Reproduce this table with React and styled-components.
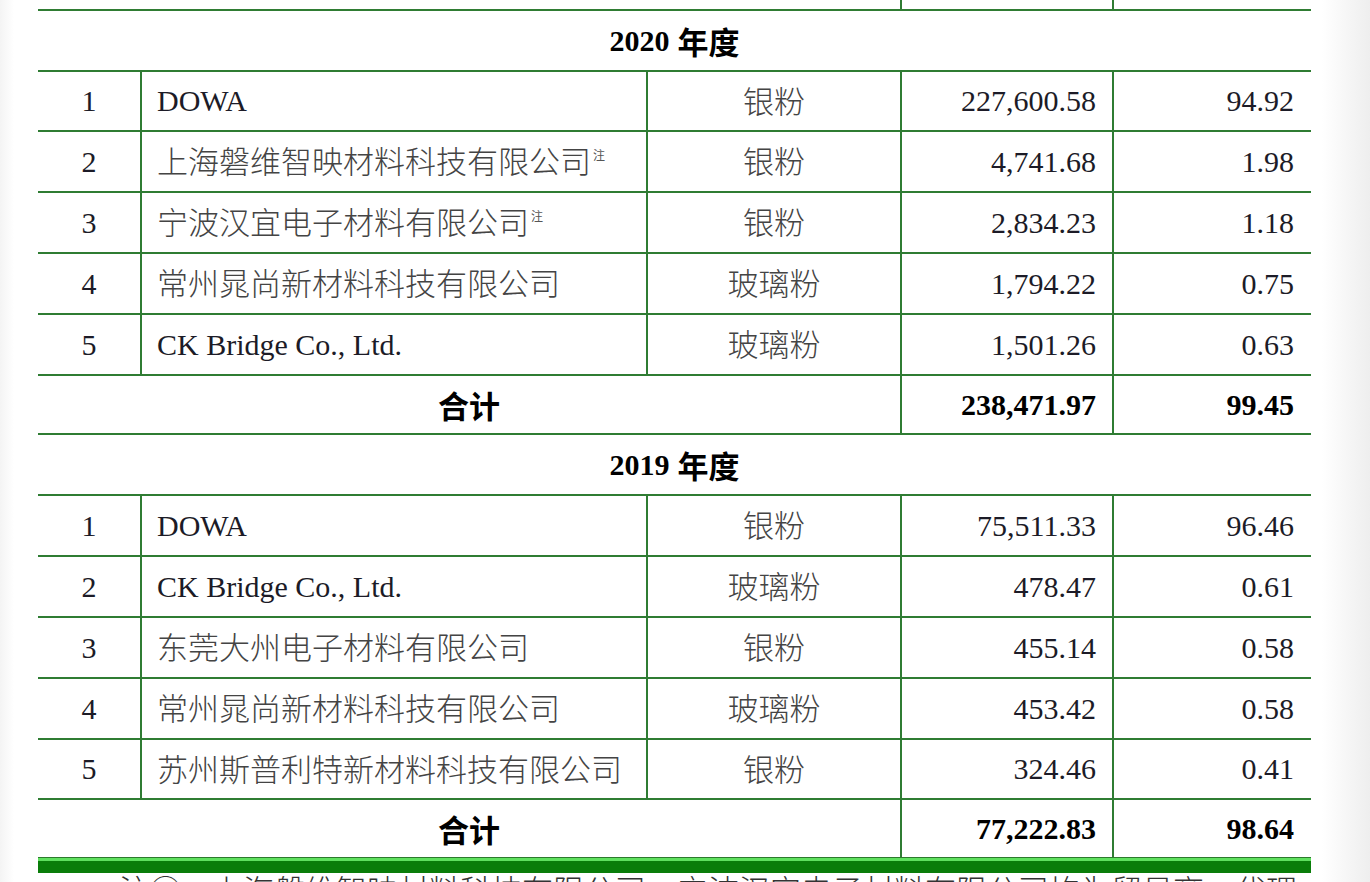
import React from 'react';
import styled, { createGlobalStyle } from 'styled-components';

const LINE = '#2f7c33';

const Global = createGlobalStyle`
  html, body {
    margin: 0;
    padding: 0;
    height: 882px;
    overflow: hidden;
    background: linear-gradient(to right, #f4f4f4 0, #ffffff 14px, #ffffff 1322px, #eeeeee 1370px);
  }
  body {
    font-family: "Liberation Serif", "Noto Sans CJK SC", serif;
    color: #1c1b27;
  }
`;

const Table = styled.div`
  margin-left: 38px;
  width: 1273px;
`;

const Row = styled.div`
  display: grid;
  grid-template-columns: 102px 506px 254px 212px 199px;
  box-sizing: border-box;
  height: ${(p) => p.$h}px;
  border-bottom: ${(p) => (p.$noLine ? 'none' : `2px solid ${LINE}`)};
`;

const Cell = styled.div`
  display: flex;
  align-items: center;
  justify-content: ${(p) =>
    p.$align === 'left' ? 'flex-start' : p.$align === 'right' ? 'flex-end' : 'center'};
  padding-left: ${(p) => (p.$align === 'left' ? 15 : 0)}px;
  padding-right: ${(p) => (p.$align === 'right' ? p.$pr || 16 : 0)}px;
  border-left: ${(p) => (p.$divider ? `2px solid ${LINE}` : 'none')};
  grid-column: ${(p) => p.$span || 'auto'};
  font-size: 30px;
  font-weight: ${(p) => (p.$bold ? 700 : 400)};
  color: ${(p) => (p.$bold ? '#000' : '#1c1b27')};
  white-space: nowrap;
`;

const CJK = styled.span`
  font-family: "Noto Sans CJK SC", sans-serif;
  font-size: 31px;
  color: ${(p) => (p.$bold ? '#000' : '#444')};
  font-weight: ${(p) => (p.$bold ? 700 : 300)};
  margin-left: ${(p) => p.$ml || 0}px;
  position: relative;
  top: ${(p) => (p.$bold ? 0 : -2)}px;
`;

const Mark = styled.span`
  font-family: "Noto Sans CJK SC", sans-serif;
  font-size: 12px;
  color: #555;
  align-self: flex-start;
  margin-top: 14px;
  margin-left: 2px;
`;

const Bar = styled.div`
  width: 1273px;
  margin-left: 38px;
  height: 16px;
  background: linear-gradient(
    to bottom,
    #2c7a2c 0,
    #2c7a2c 1px,
    #5fe05f 1px,
    #5fe05f 4px,
    #0a7d0a 4px,
    #0a7d0a 100%
  );
`;

const Note = styled.div`
  padding-left: 119px;
  font-family: "Noto Sans CJK SC", sans-serif;
  font-size: 31px;
  line-height: 31px;
  font-weight: 300;
  color: #333;
  white-space: nowrap;
  overflow: hidden;
`;

const isCJK = (s) => /[\u4e00-\u9fff]/.test(s);

function Name({ text, mark }) {
  return (
    <Cell $align="left" $divider>
      {isCJK(text) ? <CJK>{text}</CJK> : text}
      {mark && <Mark>注</Mark>}
    </Cell>
  );
}

function DataRow({ r, h }) {
  return (
    <Row $h={h}>
      <Cell>{r[0]}</Cell>
      <Name text={r[1]} mark={r[5]} />
      <Cell $divider>
        <CJK>{r[2]}</CJK>
      </Cell>
      <Cell $divider $align="right" $pr={16}>
        {r[3]}
      </Cell>
      <Cell $divider $align="right" $pr={17}>
        {r[4]}
      </Cell>
    </Row>
  );
}

function TotalRow({ a, b, h, noLine }) {
  return (
    <Row $h={h} $noLine={noLine}>
      <Cell $span="1 / 4" $bold>
        <CJK $bold>合计</CJK>
      </Cell>
      <Cell $divider $align="right" $pr={16} $bold>
        {a}
      </Cell>
      <Cell $divider $align="right" $pr={17} $bold>
        {b}
      </Cell>
    </Row>
  );
}

function YearRow({ year, h }) {
  return (
    <Row $h={h}>
      <Cell $span="1 / -1" $bold>
        {year}
        <CJK $bold $ml={8}>年度</CJK>
      </Cell>
    </Row>
  );
}

const y2020 = [
  ['1', 'DOWA', '银粉', '227,600.58', '94.92'],
  ['2', '上海磐维智映材料科技有限公司', '银粉', '4,741.68', '1.98', true],
  ['3', '宁波汉宜电子材料有限公司', '银粉', '2,834.23', '1.18', true],
  ['4', '常州晁尚新材料科技有限公司', '玻璃粉', '1,794.22', '0.75'],
  ['5', 'CK Bridge Co., Ltd.', '玻璃粉', '1,501.26', '0.63'],
];

const y2019 = [
  ['1', 'DOWA', '银粉', '75,511.33', '96.46'],
  ['2', 'CK Bridge Co., Ltd.', '玻璃粉', '478.47', '0.61'],
  ['3', '东莞大州电子材料有限公司', '银粉', '455.14', '0.58'],
  ['4', '常州晁尚新材料科技有限公司', '玻璃粉', '453.42', '0.58'],
  ['5', '苏州斯普利特新材料科技有限公司', '银粉', '324.46', '0.41'],
];

const h2020 = [60, 61, 61, 61, 61];
const h2019 = [61, 61, 61, 61, 60];

export default function App() {
  return (
    <>
      <Global />
      <Table>
        <Row $h={11}>
          <Cell $span="1 / 4" />
          <Cell $divider />
          <Cell $divider />
        </Row>
        <YearRow year="2020" h={61} />
        {y2020.map((r, i) => (
          <DataRow key={'a' + i} r={r} h={h2020[i]} />
        ))}
        <TotalRow a="238,471.97" b="99.45" h={59} />
        <YearRow year="2019" h={61} />
        {y2019.map((r, i) => (
          <DataRow key={'b' + i} r={r} h={h2019[i]} />
        ))}
        <TotalRow a="77,222.83" b="98.64" h={57} noLine />
      </Table>
      <Bar />
      <Note>注①：上海磐维智映材料科技有限公司、宁波汉宜电子材料有限公司均为贸易商，代理</Note>
    </>
  );
}
